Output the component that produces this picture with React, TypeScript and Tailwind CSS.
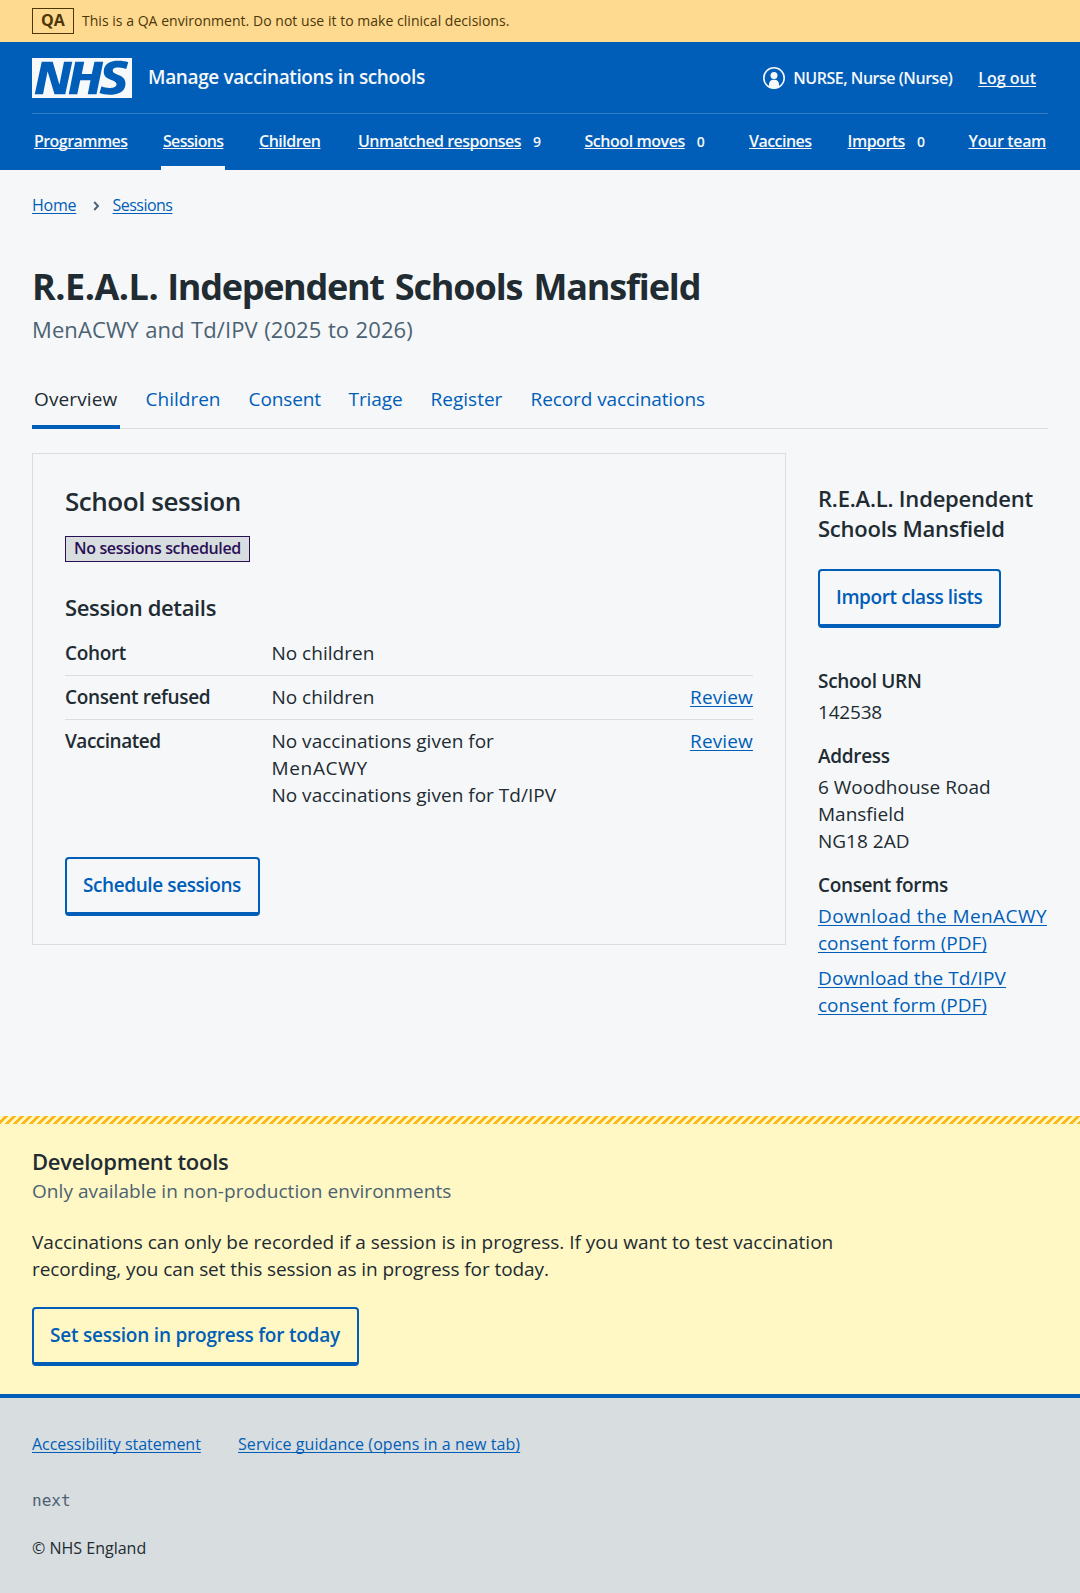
import type { ReactNode } from "react";

const navItems = [
  { label: "Programmes", item: "w-[129px]", text: "tracking-[-0.56px]" },
  { label: "Sessions", item: "w-[96px]", text: "tracking-[-0.68px]", current: true },
  { label: "Children", item: "w-[99px]", text: "tracking-[-0.5px]" },
  { label: "Unmatched responses", item: "w-[226.5px]", text: "tracking-[-0.52px]", count: 9 },
  { label: "School moves", item: "w-[164.5px]", text: "tracking-[-0.45px]", count: 0 },
  { label: "Vaccines", item: "w-[98.5px]", text: "tracking-[-0.53px]" },
  { label: "Imports", item: "w-[121px]", text: "tracking-[-0.5px]", count: 0 },
  { label: "Your team", item: "w-[82px]", text: "tracking-[-0.34px]" },
];

const tabs = [
  { label: "Overview", style: "w-[87.6px] tracking-[0.13px]", current: true },
  { label: "Children", style: "w-[79px]" },
  { label: "Consent", style: "w-[76px] tracking-[-0.12px]" },
  { label: "Triage", style: "w-[58px] tracking-[-0.1px]" },
  { label: "Register", style: "w-[76px]" },
  { label: "Record vaccinations", style: "w-[180px] tracking-[-0.1px]" },
];

function NhsLogo() {
  return (
    <svg className="h-10 w-[100px]" viewBox="0 0 200 80" role="img" aria-label="NHS">
      <path
        fill="#f6f8fa"
        d="M200 0v80H0V0h200Zm-27.5 5.5c-14.5 0-29 5-29 22 0 10.2 7.7 13.5 14.7 16.3l.7.3c5.4 2 10.1 3.9 10.1 8.4 0 6.5-8.5 7.5-14 7.5s-12.5-1.5-16-3.5L135 70c5.5 2 13.5 3.5 20 3.5 15.5 0 32-4.5 32-22.5 0-19.5-25.5-16.5-25.5-25.5 0-5.5 5.5-6.5 12.5-6.5a35 35 0 0 1 14.5 3l4-13.5c-4.5-2-12-3-20-3Zm-131 2h-22l-14 65H22l9-45h.5l13.5 45h21.5l14-65H64l-9 45h-.5l-13-45Zm63 0h-18l-13 65h17l6-28H117l-5.5 28H129l13.5-65H125L119.5 32h-20l5-24.5Z"
      />
    </svg>
  );
}

function UserIcon() {
  return (
    <svg className="size-[22px]" viewBox="0 0 22 22">
      <circle cx="11" cy="11" r="10.2" fill="none" stroke="#f6f8fa" strokeWidth="1.6" />
      <circle cx="11" cy="8.5" r="3.5" fill="#f6f8fa" />
      <path fill="#f6f8fa" d="M6 20.3V17a4.3 4.3 0 0 1 4.3-4.3h1.4A4.3 4.3 0 0 1 16 17v3.3a10.6 10.6 0 0 1-10 0Z" />
    </svg>
  );
}

function OutlineButton({ className, children }: { className: string; children: ReactNode }) {
  return (
    <button
      className={
        "block h-[59px] rounded-[4px] border-2 border-b-4 border-[#005eb8] pb-[1px] pl-4 text-left text-[19px] leading-[27px] font-semibold whitespace-nowrap text-[#005eb8] " +
        className
      }
    >
      {children}
    </button>
  );
}

function Link({ className = "", children }: { className?: string; children: ReactNode }) {
  return (
    <a
      href="#"
      className={
        "text-[#005eb8] underline decoration-[1.2px] underline-offset-[1.5px] [text-decoration-skip-ink:none] " +
        className
      }
    >
      {children}
    </a>
  );
}

function Row({ title, titleClass, action, last, children }: {
  title: string;
  titleClass: string;
  action?: boolean;
  last?: boolean;
  children: ReactNode;
}) {
  return (
    <div className={"flex pt-2 " + (last ? "" : "border-b border-[#d8dde0] pb-2")}>
      <dt className={"w-[206.4px] font-semibold " + titleClass}>{title}</dt>
      <dd className="flex-1 tracking-[0.02px]">{children}</dd>
      {action && (
        <dd>
          <Link className="tracking-[0.15px]">Review</Link>
        </dd>
      )}
    </div>
  );
}

export default function App() {
  return (
    <div className="min-h-[1593px] w-[1080px] bg-[#f6f7f9] font-['Open_Sans',sans-serif] text-[19px] leading-[27px] text-[#212b32]">
      <div className="flex h-[42px] items-center gap-2 bg-[#fdda90] px-8 text-[#4d3708]">
        <strong className="flex h-[26px] w-[42px] justify-center border border-[#4d3708] text-[16px] leading-[22px] font-bold">
          QA
        </strong>
        <span className="text-[14px] leading-5 tracking-[0.03px]">
          This is a QA environment. Do not use it to make clinical decisions.
        </span>
      </div>

      <header className="bg-[#005eb8] px-8 text-[#f6f8fa]">
        <div className="flex h-[72px] items-center border-b border-[#337ec6]">
          <NhsLogo />
          <span className="ml-4 font-semibold tracking-[-0.37px]">Manage vaccinations in schools</span>
          <div className="ml-auto flex items-center pr-3 text-[16px] leading-6 font-semibold">
            <UserIcon />
            <span className="ml-2 w-[160px] tracking-[-0.47px] whitespace-nowrap">NURSE, Nurse (Nurse)</span>
            <a href="#" className="ml-[25px] underline decoration-1 underline-offset-[1.5px] [text-decoration-skip-ink:none]">
              Log out
            </a>
          </div>
        </div>
        <nav className="flex h-14 text-[16px] leading-6 font-semibold whitespace-nowrap">
          {navItems.map((n) => (
            <div key={n.label} className={"shrink-0 " + n.item}>
              <div
                className={
                  "inline-flex h-14 items-center border-b-4 px-[2px] pt-[2px] " +
                  (n.current ? "border-[#f6f8fa]" : "border-transparent")
                }
              >
                <a href="#" className={"underline decoration-1 underline-offset-[1px] [text-decoration-skip-ink:none] " + n.text}>
                  {n.label}
                </a>
                {n.count !== undefined && <span className="ml-3 pt-[1px] text-[14px]">{n.count}</span>}
              </div>
            </div>
          ))}
        </nav>
      </header>

      <main className="h-[946px] px-8 pt-[23px]">
        <div className="flex items-center text-[16px] leading-6">
          <Link className="w-[44.5px] tracking-[-0.23px]">Home</Link>
          <svg className="mt-[2px] ml-[16.5px] h-[10px] w-[7px]" viewBox="0 0 7 10">
            <path d="M1.2 1 5 5 1.2 9" fill="none" stroke="#4c6272" strokeWidth="1.9" />
          </svg>
          <Link className="ml-[12.5px] tracking-[-0.52px]">Sessions</Link>
        </div>

        <h1 className="mt-[48px] text-[36px] leading-[44px] font-bold tracking-[-1.15px] whitespace-nowrap [word-spacing:3px]">
          <span className="tracking-[-0.5px]">R.E.A.L.</span>
          <span className="tracking-[-1.3px] [word-spacing:1px]"> Independent</span> Schools Mansfield
        </h1>
        <p className="mt-[4px] text-[22px] leading-8 tracking-[0.1px] text-[#4c6272] [word-spacing:0.6px]">
          MenACWY and Td/IPV (2025 to 2026)
        </p>

        <div className="mt-[34px] flex h-[50px] gap-6 border-b border-[#d8dde0] whitespace-nowrap">
          {tabs.map((t) => (
            <a
              key={t.label}
              href="#"
              className={
                "flex h-[50px] items-center border-b-4 px-[2px] pb-[5px] " +
                (t.current ? "border-[#005eb8] text-[#212b32] " : "border-transparent text-[#005eb8] ") +
                t.style
              }
            >
              {t.label}
            </a>
          ))}
        </div>

        <div className="mt-6 flex items-start gap-8">
          <section className="h-[492px] w-[754px] border border-[#d8dde0] px-8 pt-[29px]">
            <h2 className="text-[26px] leading-9 font-semibold tracking-[-0.45px]">School session</h2>
            <strong className="mt-[17px] flex h-[26px] w-[185px] border border-[#2a0f55] bg-[#d8dde0] pl-2 text-[16px] leading-[22px] font-semibold tracking-[-0.35px] text-[#2a0f55]">
              No sessions scheduled
            </strong>
            <h3 className="mt-[30px] text-[22px] leading-[30px] font-semibold tracking-[-0.35px]">Session details</h3>
            <dl className="mt-[10px]">
              <Row title="Cohort" titleClass="tracking-[-0.35px]">
                No children
              </Row>
              <Row title="Consent refused" titleClass="tracking-[-0.35px]" action>
                No children
              </Row>
              <Row title="Vaccinated" titleClass="tracking-[-0.49px]" action last>
                No vaccinations given for
                <br />
                <span className="tracking-[0.7px]">MenACWY</span>
                <br />
                No vaccinations given for Td/IPV
              </Row>
            </dl>
            <OutlineButton className="mt-12 w-[194.5px] tracking-[-0.41px]">Schedule sessions</OutlineButton>
          </section>

          <aside className="mt-[30px] w-[230px] whitespace-nowrap">
            <h2 className="text-[22px] leading-[30px] font-semibold tracking-[-0.2px]">
              R.E.A.L. Independent
              <br />
              <span className="tracking-[-0.24px]">Schools Mansfield</span>
            </h2>
            <OutlineButton className="mt-[26px] w-[183px] tracking-[-0.41px]">Import class lists</OutlineButton>
            <h3 className="mt-[40px] font-semibold tracking-[-0.3px]">School URN</h3>
            <p className="mt-1 tracking-[-0.2px]">142538</p>
            <h3 className="mt-[17px] font-semibold tracking-[-0.3px]">Address</h3>
            <p className="mt-1">
              6 Woodhouse Road
              <br />
              Mansfield
              <br />
              NG18 2AD
            </p>
            <h3 className="mt-[17px] font-semibold tracking-[-0.36px]">Consent forms</h3>
            <p className="mt-1">
              <Link>
                <span className="tracking-[0.42px]">Download the MenACWY</span>
                <br />
                <span className="tracking-[-0.05px]">consent form (PDF)</span>
              </Link>
            </p>
            <p className="mt-2">
              <Link>
                <span className="tracking-[0.1px]">Download the Td/IPV</span>
                <br />
                <span className="tracking-[-0.05px]">consent form (PDF)</span>
              </Link>
            </p>
          </aside>
        </div>
      </main>

      <section className="bg-[#fff7c4]">
        <div className="h-2 bg-[linear-gradient(135deg,transparent_25%,#ffb81c_25%,#ffb81c_50%,transparent_50%,transparent_75%,#ffb81c_75%)] bg-[length:8px_8px]" />
        <div className="px-8 pt-[22px] pb-7">
          <h2 className="text-[22px] leading-[30px] font-semibold tracking-[-0.26px]">Development tools</h2>
          <p className="mt-[2px] tracking-[0.06px] text-[#4c6272]">Only available in non-production environments</p>
          <p className="mt-6 whitespace-nowrap">
            Vaccinations can only be recorded if a session is in progress. If you want to test vaccination
            <br />
            <span className="tracking-[-0.085px]">recording, you can set this session as in progress for today.</span>
          </p>
          <OutlineButton className="mt-6 w-[326.5px] tracking-[-0.22px]">
            Set session in progress for today
          </OutlineButton>
        </div>
      </section>

      <footer className="h-[199px] border-t-4 border-[#005eb8] bg-[#d8dde0] px-8 pt-[34px] text-[16px] leading-6">
        <div className="flex">
          <Link className="w-[169px] tracking-[-0.04px]">Accessibility statement</Link>
          <Link className="ml-[37px] tracking-[0.08px]">Service guidance (opens in a new tab)</Link>
        </div>
        <p className="mt-[33px] font-['DejaVu_Sans_Mono',monospace] text-[#4c6272]">next</p>
        <p className="mt-[23px]">© NHS England</p>
      </footer>
    </div>
  );
}
